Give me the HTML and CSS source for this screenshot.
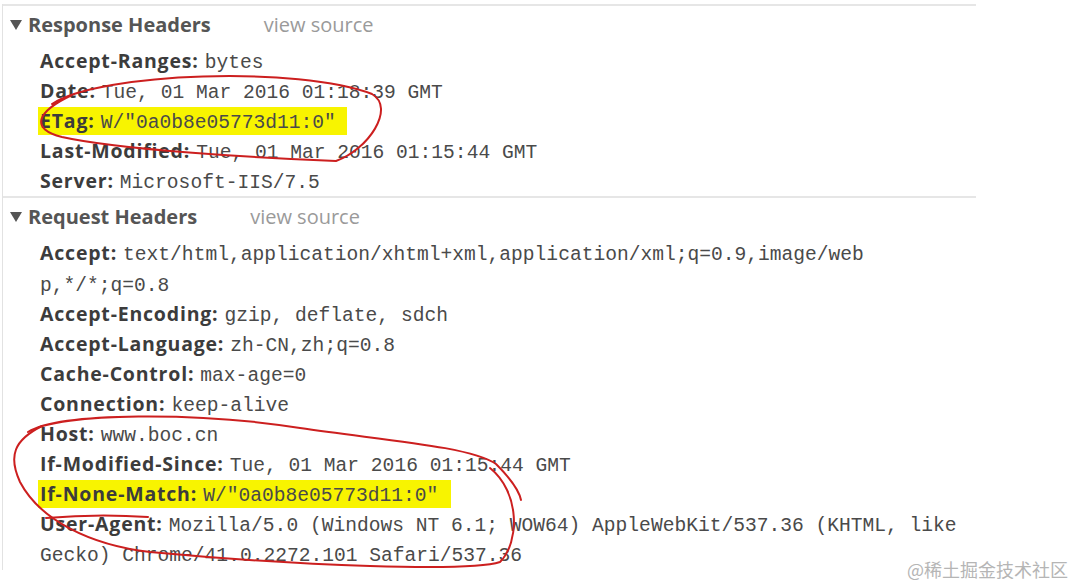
FILE: index.html
```html
<!DOCTYPE html>
<html lang="en">
<head>
    <meta charset="UTF-8">
    <title>Headers</title>
    <link rel="stylesheet" href="styles.css">
</head>
<body>
    <div class="panel">
        <div class="section">
            <div class="section-title">
                <svg class="caret" width="12" height="10" viewBox="0 0 12 10"><polygon points="0,0 12,0 6,10" fill="#555"/></svg>
                <span class="title">Response Headers</span>
                <span class="source">view source</span>
            </div>
            <div class="rows">
                <div class="row"><span class="name">Accept-Ranges:</span> <span class="value">bytes</span></div>
                <div class="row"><span class="name">Date:</span> <span class="value">Tue, 01 Mar 2016 01:18:39 GMT</span></div>
                <div class="row"><span class="hl"><span class="name">ETag:</span> <span class="value">W/"0a0b8e05773d11:0"</span></span></div>
                <div class="row"><span class="name">Last-Modified:</span> <span class="value">Tue, 01 Mar 2016 01:15:44 GMT</span></div>
                <div class="row"><span class="name">Server:</span> <span class="value">Microsoft-IIS/7.5</span></div>
            </div>
        </div>
        <div class="section">
            <div class="section-title">
                <svg class="caret" width="12" height="10" viewBox="0 0 12 10"><polygon points="0,0 12,0 6,10" fill="#555"/></svg>
                <span class="title">Request Headers</span>
                <span class="source">view source</span>
            </div>
            <div class="rows">
                <div class="row"><span class="name">Accept:</span> <span class="value">text/html,application/xhtml+xml,application/xml;q=0.9,image/web<br>p,*/*;q=0.8</span></div>
                <div class="row"><span class="name">Accept-Encoding:</span> <span class="value">gzip, deflate, sdch</span></div>
                <div class="row"><span class="name">Accept-Language:</span> <span class="value">zh-CN,zh;q=0.8</span></div>
                <div class="row"><span class="name">Cache-Control:</span> <span class="value">max-age=0</span></div>
                <div class="row"><span class="name">Connection:</span> <span class="value">keep-alive</span></div>
                <div class="row"><span class="name">Host:</span> <span class="value">www.boc.cn</span></div>
                <div class="row"><span class="name">If-Modified-Since:</span> <span class="value">Tue, 01 Mar 2016 01:15:44 GMT</span></div>
                <div class="row"><span class="hl wide"><span class="name">If-None-Match:</span> <span class="value">W/"0a0b8e05773d11:0"</span></span></div>
                <div class="row"><span class="name">User-Agent:</span> <span class="value">Mozilla/5.0 (Windows NT 6.1; WOW64) AppleWebKit/537.36 (KHTML, like<br>Gecko) Chrome/41.0.2272.101 Safari/537.36</span></div>
            </div>
        </div>
    </div>

    <svg class="marks" width="1086" height="588" viewBox="0 0 1086 588">
        <path d="M52 104 C100 72, 300 66, 372 94 C396 108, 368 150, 336 161 C260 158, 120 150, 62 137 C30 129, 36 112, 72 95" />
        <path d="M28 432 C60 412, 200 412, 300 428 C380 440, 470 446, 496 464 C510 478, 519 490, 521 500" />
        <path d="M490 468 C520 492, 520 542, 500 562 C470 572, 300 566, 150 552 C90 545, 40 520, 20 482 C8 456, 14 440, 42 426" />
        <path d="M46 518 C80 515, 120 515, 148 517" />
    </svg>

    <div class="watermark">@稀土掘金技术社区</div>
</body>
</html>
```

FILE: styles.css
```css
body {
    margin: 0;
    background: #fff;
    font-family: "Open Sans", "Noto Sans", sans-serif;
    color: #333;
    overflow: hidden;
}
.panel {
    margin: 4px 0 0 2px;
    width: 973px;
    border-left: 1px solid #e2e2e2;
}
.section {
    border-top: 2px solid #e6e6e6;
}
.section-title {
    display: flex;
    align-items: center;
    height: 38px;
    padding-left: 7px;
    font-size: 20px;
    line-height: 1;
}
.caret {
    margin-right: 6px;
}
.title {
    font-weight: bold;
    color: #555;
}
.source {
    margin-left: 53px;
    color: #9a9a9a;
}
.rows {
    padding: 2px 0 0 37px;
}
.row {
    line-height: 30.1px;
    white-space: nowrap;
    font-size: 19.5px;
}
.name {
    font-weight: bold;
    color: #3c3c3c;
    line-height: 1;
    letter-spacing: 0.8px;
}
.value {
    margin-left: 1px;
    font-family: "Liberation Mono", monospace;
    font-size: 19.6px;
    line-height: 1;
    color: #4a4a4a;
}
.hl {
    display: inline-block;
    line-height: 28px;
    padding: 0 11px 0 2px;
    margin-left: -2px;
    background: #f8f400;
}
.hl.wide {
    padding-right: 13px;
}
.marks {
    position: absolute;
    left: 0;
    top: 0;
    pointer-events: none;
}
.marks path {
    fill: none;
    stroke: #cc1f1f;
    stroke-width: 2;
    stroke-linecap: round;
}
.watermark {
    position: absolute;
    left: 907px;
    top: 556px;
    font-family: "Noto Sans CJK SC", sans-serif;
    font-size: 18px;
    color: #b5b5b5;
}
```
